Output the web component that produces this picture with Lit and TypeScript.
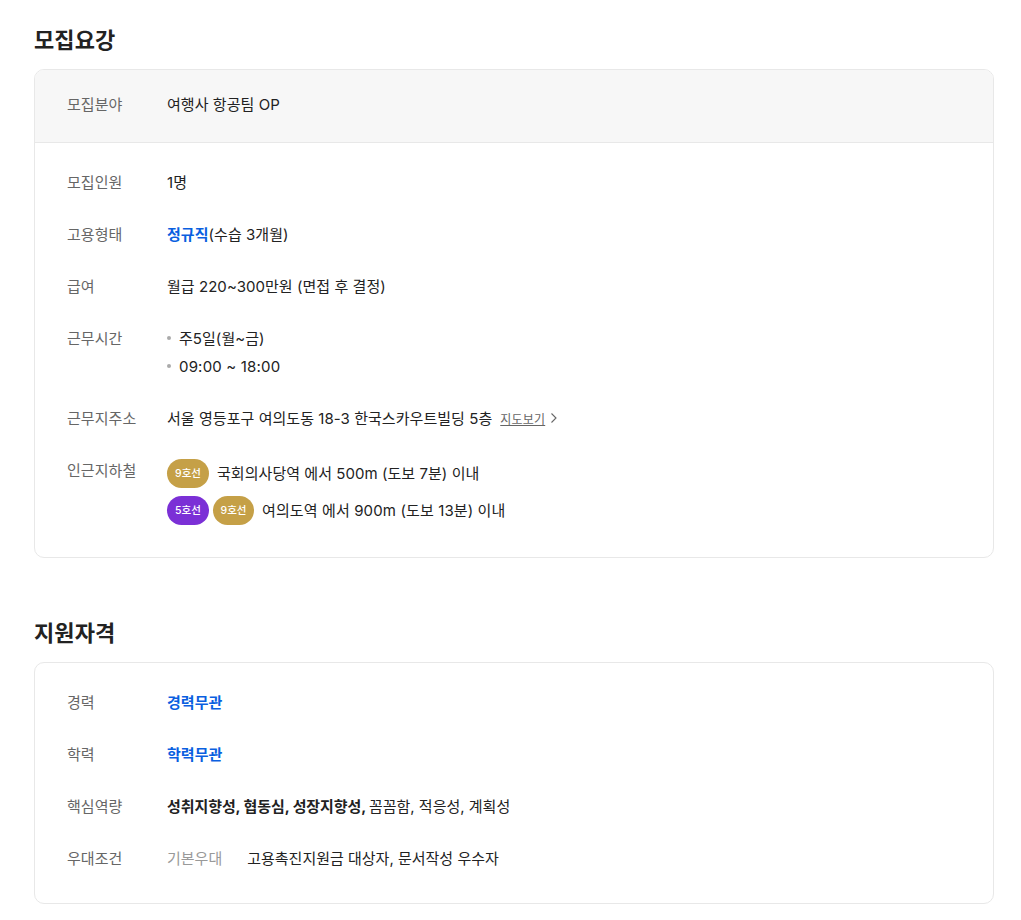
import { LitElement, html, css } from "lit";
import { customElement } from "lit/decorators.js";

@customElement("app-root")
export class AppRoot extends LitElement {
  static styles = css`
    :host { display: block; padding: 22px 27px 0 34px; font-family: Inter, "Noto Sans CJK KR", sans-serif; color: #222; font-size: 15px; letter-spacing: 0.05px; }
    h2 { margin: 0 0 11px; font-size: 22px; font-weight: 700; line-height: 36px; color: #222; letter-spacing: 0.1px; }
    .card { border: 1px solid #e8e8e8; border-radius: 10px; overflow: hidden; margin-bottom: 57px; }
    .head { background: #f7f7f7; border-bottom: 1px solid #e8e8e8; padding: 24px 32px 26px; }
    .body { padding: 29px 32px 32px; display: flex; flex-direction: column; gap: 30px; }
    .body.q { padding-top: 29px; padding-bottom: 33px; }
    .row { display: flex; line-height: 22px; }
    .row.subway { margin-top: -1px; }
    .k { width: 100px; color: #666; flex: none; }
    .blue { color: #0a5fe0; font-weight: 700; }
    b { font-weight: 700; letter-spacing: -0.08px; margin-right: -1.5px; }
    ul { list-style: none; margin: 0; padding: 0; display: flex; flex-direction: column; gap: 6px; }
    li { display: flex; align-items: center; gap: 8px; }
    li.time { letter-spacing: 0.18px; }
    li::before { content: ""; width: 4px; height: 4px; margin-top: -2px; border-radius: 50%; background: #aaa; }
    .map { font-size: 12px; color: #666; text-decoration: underline; margin-left: 8px; letter-spacing: 0.2px; }
    .sub { display: flex; flex-direction: column; gap: 8px; margin-top: -1px; }
    .line { display: flex; align-items: center; height: 29px; }
    .pill { display: inline-flex; align-items: center; justify-content: center; width: 42px; height: 29px; border-radius: 15px; font-size: 10.5px; font-weight: 500; letter-spacing: 0; color: #fff; margin-right: 4px; }
    .narrow { width: 41px; }
    .l9 { background: #c5a047; }
    .l5 { background: #7b30d6; }
    .gray { color: #999; margin-right: 25px; }
    .after { margin-left: 4px; }
    .wider { letter-spacing: 0.12px; }
    .tight { letter-spacing: 0; }
  `;
  render() {
    return html`
      <h2>모집요강</h2>
      <div class="card">
        <div class="head"><div class="row"><span class="k">모집분야</span><span>여행사 항공팀 OP</span></div></div>
        <div class="body">
          <div class="row"><span class="k">모집인원</span><span>1명</span></div>
          <div class="row"><span class="k">고용형태</span><span><span class="blue">정규직</span>(수습 3개월)</span></div>
          <div class="row"><span class="k">급여</span><span>월급 220~300만원 (면접 후 결정)</span></div>
          <div class="row"><span class="k">근무시간</span><ul><li>주5일(월~금)</li><li class="time">09:00 ~ 18:00</li></ul></div>
          <div class="row"><span class="k">근무지주소</span><span>서울 영등포구 여의도동 18-3 한국스카우트빌딩 5층<span class="map">지도보기</span>
            <svg width="8" height="12" viewBox="0 0 8 12" fill="none" stroke="#666" stroke-width="1.1"><path d="M1.5 1.5 6 6l-4.5 4.5"/></svg></span></div>
          <div class="row subway"><span class="k">인근지하철</span><div class="sub">
            <div class="line"><span class="pill l9">9호선</span><span class="after">국회의사당역 에서 500m (도보 7분) 이내</span></div>
            <div class="line"><span class="pill l5">5호선</span><span class="pill l9 narrow">9호선</span><span class="after wider">여의도역 에서 900m (도보 13분) 이내</span></div>
          </div></div>
        </div>
      </div>
      <h2>지원자격</h2>
      <div class="card">
        <div class="body q">
          <div class="row"><span class="k">경력</span><span class="blue">경력무관</span></div>
          <div class="row"><span class="k">학력</span><span class="blue">학력무관</span></div>
          <div class="row"><span class="k">핵심역량</span><span class="tight"><b>성취지향성, 협동심, 성장지향성,</b> 꼼꼼함, 적응성, 계획성</span></div>
          <div class="row"><span class="k">우대조건</span><span class="tight"><span class="gray">기본우대</span>고용촉진지원금 대상자, 문서작성 우수자</span></div>
        </div>
      </div>
    `;
  }
}
